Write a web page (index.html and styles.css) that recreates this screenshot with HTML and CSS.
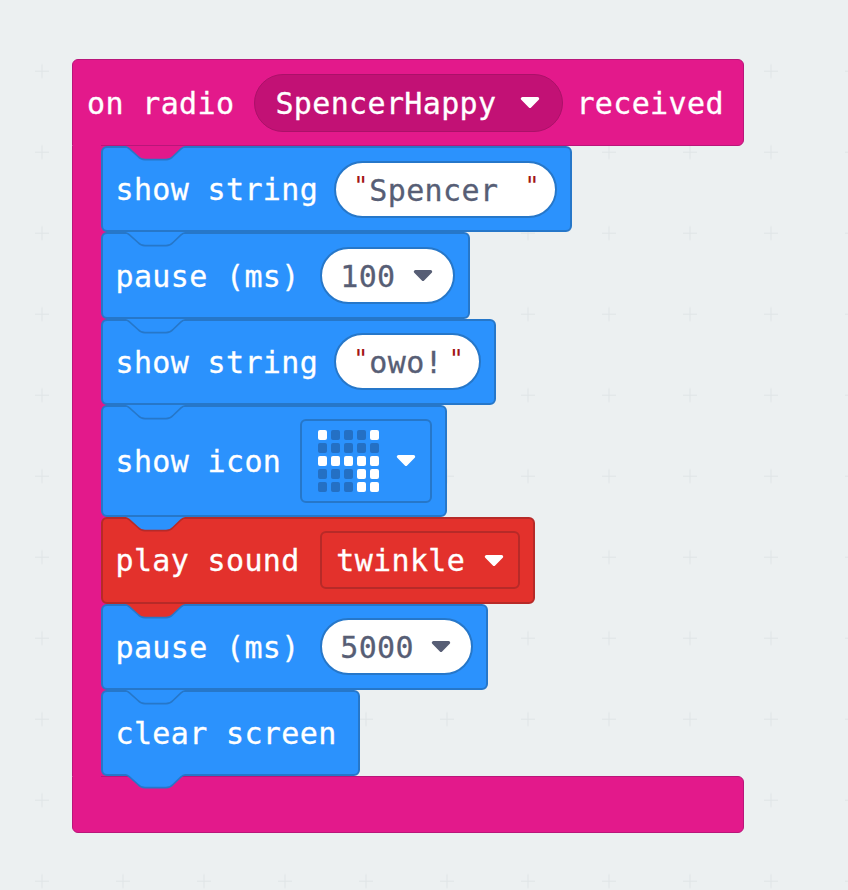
FILE: index.html
```html
<!DOCTYPE html>
<html lang="en">
<head>
<meta charset="utf-8">
<title>on radio received</title>
<link rel="stylesheet" href="styles.css">
</head>
<body>
<svg class="defs" width="0" height="0" aria-hidden="true">
  <defs>
    <symbol id="notch" viewBox="0 0 64 16">
      <path class="notch-fill" d="M0 0H2V.75C4 .75 5 1.5 6.5 2.8L15 10.5C17 12.8 19 13.6 22 13.6H43C46 13.6 48 12.8 50 10.5L58 2.8C59.5 1.5 61 .75 63 .75V0H64Z"/>
      <path class="notch-line" d="M0 .75H2C4 .75 5 1.5 6.5 2.8L15 10.5C17 12.8 19 13.6 22 13.6H43C46 13.6 48 12.8 50 10.5L58 2.8C59.5 1.5 61 .75 63 .75H64"/>
    </symbol>
    <symbol id="arrow" viewBox="0 0 20 12">
      <path d="M3 2.5H17L10 9.5Z" stroke-width="3" stroke-linejoin="round"/>
    </symbol>
  </defs>
</svg>
<main class="workspace">
  <svg class="grid" aria-hidden="true">
    <defs>
      <pattern id="plus" x="35" y="-17.3" width="81" height="81" patternUnits="userSpaceOnUse">
        <path d="M0 7.5H14M7 .5V14.5" stroke="#dfe4e6" stroke-width="1" fill="none"/>
      </pattern>
    </defs>
    <rect width="100%" height="100%" fill="url(#plus)"/>
  </svg>
  <section class="hat">
    <header class="hat-head">
      <span class="label">on radio</span>
      <span class="dropdown">SpencerHappy<svg class="arrow"><use href="#arrow"/></svg></span>
      <span class="label tail">received</span>
    </header>
    <div class="hat-body">
      <div class="block blue">
        <svg class="notch on-pink"><use href="#notch"/></svg>
        <span class="label">show string</span>
        <span class="pill text-pill"><span class="quote open">"</span>Spencer <span class="quote close wide">"</span></span>
      </div>
      <div class="block blue">
        <svg class="notch on-blue"><use href="#notch"/></svg>
        <span class="label">pause (ms)</span>
        <span class="pill num-pill">100<svg class="arrow dark"><use href="#arrow"/></svg></span>
      </div>
      <div class="block blue">
        <svg class="notch on-blue"><use href="#notch"/></svg>
        <span class="label">show string</span>
        <span class="pill text-pill"><span class="quote open">"</span>owo!<span class="quote close">"</span></span>
      </div>
      <div class="block blue tall">
        <svg class="notch on-blue"><use href="#notch"/></svg>
        <span class="label">show icon</span>
        <span class="led-field">
          <span class="leds">
            <i class="on"></i><i></i><i></i><i></i><i class="on"></i>
            <i></i><i></i><i></i><i></i><i></i>
            <i class="on"></i><i class="on"></i><i class="on"></i><i class="on"></i><i class="on"></i>
            <i></i><i></i><i></i><i class="on"></i><i class="on"></i>
            <i></i><i></i><i></i><i class="on"></i><i class="on"></i>
          </span>
          <svg class="arrow"><use href="#arrow"/></svg>
        </span>
      </div>
      <div class="block red">
        <svg class="notch on-blue"><use href="#notch"/></svg>
        <span class="label">play sound</span>
        <span class="sound-field">twinkle<svg class="arrow"><use href="#arrow"/></svg></span>
      </div>
      <div class="block blue">
        <svg class="notch on-red"><use href="#notch"/></svg>
        <span class="label">pause (ms)</span>
        <span class="pill num-pill">5000<svg class="arrow dark"><use href="#arrow"/></svg></span>
      </div>
      <div class="block blue last">
        <svg class="notch on-blue"><use href="#notch"/></svg>
        <span class="label">clear screen</span>
        <svg class="notch tab on-blue"><use href="#notch"/></svg>
      </div>
    </div>
    <footer class="hat-foot"></footer>
  </section>
</main>
</body>
</html>
```

FILE: styles.css
```css
* { box-sizing: border-box; }

html, body {
  margin: 0;
  height: 100%;
}

body {
  background: #ecf0f1;
  overflow: hidden;
  font-family: "DejaVu Sans Mono", "Liberation Mono", monospace;
  font-size: 30px;
  line-height: 1;
  letter-spacing: 0.36px;
  -webkit-text-stroke: 0.3px currentColor;
  color: #fff;
}

.defs { display: block; height: 0; }

.workspace {
  position: relative;
  height: 890px;
  padding: 59px 0 0 72px;
}

.grid {
  position: absolute;
  inset: 0;
  width: 100%;
  height: 100%;
}

.hat {
  position: relative;
  display: inline-flex;
  flex-direction: column;
}

.hat-head {
  position: relative;
  display: flex;
  align-items: center;
  height: 87px;
  padding: 0 19.5px 0 14px;
  background: #e3198b;
  border: 1.5px solid #b9167a;
  border-radius: 6px 6px 6px 0;
}

.hat-head::after,
.hat-foot::before {
  content: "";
  position: absolute;
  left: 0;
  width: 28px;
  height: 2px;
  background: #e3198b;
}

.hat-head::after { bottom: -2px; }
.hat-foot::before { top: -2px; }

.label {
  white-space: pre;
  padding-top: 2px;
}

.tail { margin-left: 13px; }

.dropdown {
  display: flex;
  align-items: center;
  height: 58px;
  margin-left: 19.5px;
  padding: 2px 21px 0 20.5px;
  background: #c21175;
  border: 1.5px solid #ab1169;
  border-radius: 29px;
}

.dropdown .arrow { margin-left: 23px; }

.arrow {
  flex: none;
  width: 22px;
  height: 13px;
  margin-bottom: 2px;
  fill: #fff;
  stroke: #fff;
}

.arrow.dark {
  fill: #575e75;
  stroke: #575e75;
}

.hat-body {
  position: relative;
  z-index: 1;
  display: flex;
  flex-direction: column;
  align-items: flex-start;
  padding-left: 27.5px;
  border-left: 1.5px solid #b9167a;
  background: linear-gradient(90deg, #e3198b 34px, transparent 34px);
}

.hat-foot {
  position: relative;
  height: 57px;
  background: #e3198b;
  border: 1.5px solid #b9167a;
  border-radius: 0 6px 6px 6px;
}

.block {
  position: relative;
  display: flex;
  align-items: center;
  height: 86.4px;
  padding: 0 13px;
  border: 2px solid;
  border-radius: 6px;
}

.blue { background: #2b92fd; border-color: #2677c9; }
.red  { background: #e3312c; border-color: #b72a28; padding-right: 13px; }
.tall { height: 112px; padding-right: 13px; }
.last { padding-right: 21.7px; }

.notch {
  position: absolute;
  left: 20px;
  top: -2px;
  width: 64px;
  height: 16px;
  stroke: #2677c9;
  overflow: visible;
}

.red .notch { stroke: #b72a28; }

.notch-fill { stroke: none; fill: inherit; }
.notch-line { fill: none; stroke-width: 1.6; }

.on-pink { fill: #e3198b; }
.on-blue { fill: #2b92fd; }
.on-red  { fill: #e3312c; }

.tab {
  top: auto;
  bottom: -16px;
  height: 16px;
}

.pill {
  display: flex;
  align-items: center;
  height: 57px;
  padding: 2px 19px 0 18px;
  background: #fff;
  border: 2px solid #2677c9;
  border-radius: 28.5px;
  color: #575e75;
  white-space: pre;
}

.num-pill { margin-left: 20.5px; }
.num-pill .arrow { margin-left: 16.5px; }

.text-pill {
  display: block;
  line-height: 51px;
  margin-left: 16px;
  padding: 2px 13.5px 0 13.5px;
}

.quote {
  position: relative;
  top: -6.5px;
  font-size: 25px;
  -webkit-text-stroke: 0;
  color: #a31515;
  margin-left: 3.5px;
  margin-right: 0.8px;
}

.close { margin-left: 5.7px; margin-right: 1.2px; }
.close.wide { margin-left: 7.7px; }

.led-field {
  display: flex;
  align-items: center;
  height: 84px;
  margin-left: 19px;
  padding: 0 13px 0 15.5px;
  border: 2px solid #2677c9;
  border-radius: 6px;
}

.led-field .arrow { margin-left: 16px; }

.leds {
  display: grid;
  grid-template-columns: repeat(5, 9.5px);
  grid-auto-rows: 9.5px;
  gap: 3.5px;
}

.leds i {
  background: #2470c4;
  border-radius: 2px;
}

.leds i.on { background: #fff; }

.sound-field {
  display: flex;
  align-items: center;
  height: 58px;
  margin-left: 20.5px;
  padding: 2px 13px 0 14px;
  background: #e3312c;
  border: 2px solid #b72a28;
  border-radius: 6px;
}

.sound-field .arrow { margin-left: 18px; }
```
